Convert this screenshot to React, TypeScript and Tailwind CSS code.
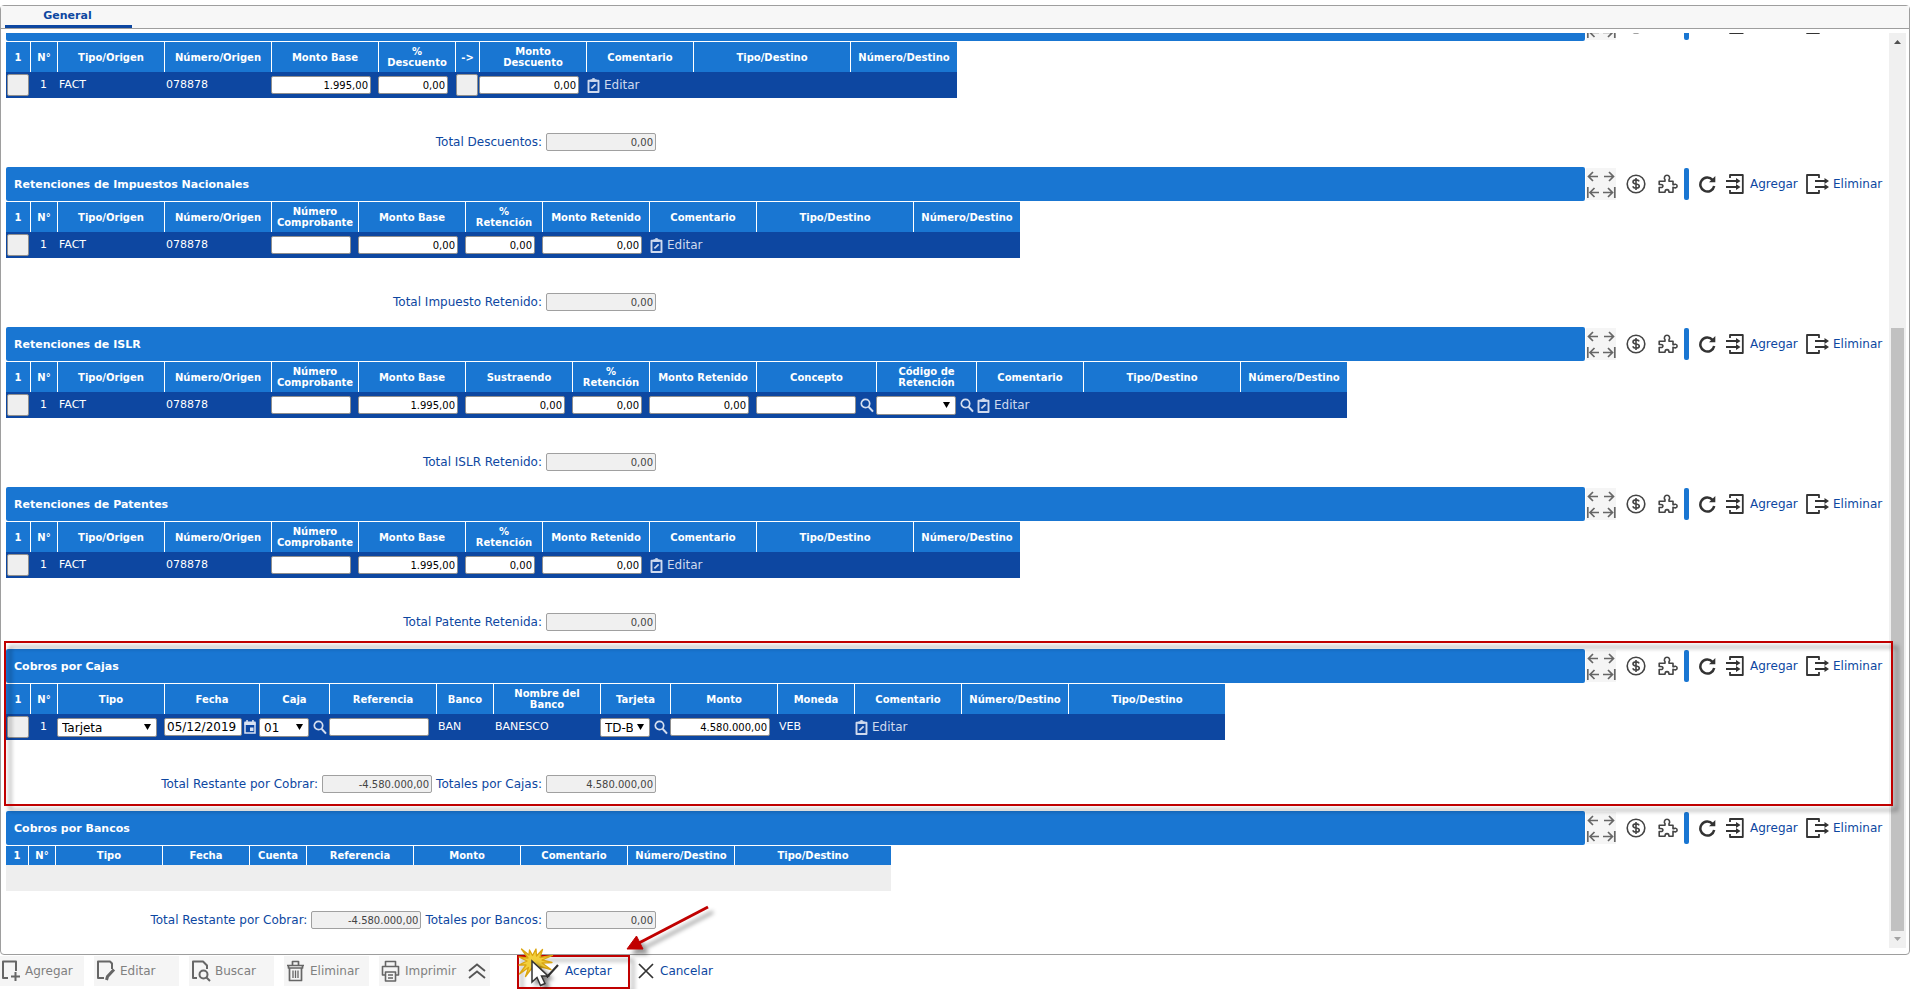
import { useState } from 'react';
import type { ReactNode } from 'react';

type Cell =
  | { kind: 'text'; value: string }
  | { kind: 'input'; value: string; width: string; align?: string; icon?: 'search' | 'calendar'; big?: boolean }
  | { kind: 'select'; value: string; width: string; icon?: 'search' }
  | { kind: 'button' }
  | { kind: 'edit' }
  | { kind: 'empty' };

type Column = { label: string; width: number; cell: Cell };
type Total = { label: string; value: string };

const text = (value: string): Cell => ({ kind: 'text', value });
const amount = (value: string, width = 'w-[100px]'): Cell => ({ kind: 'input', value, width, align: 'text-right' });
const edit: Cell = { kind: 'edit' };
const empty: Cell = { kind: 'empty' };

const origin: Column[] = [
  { label: 'Tipo/Origen', width: 107, cell: text('FACT') },
  { label: 'Número/Origen', width: 107, cell: text('078878') },
];

const destination: Column[] = [
  { label: 'Comentario', width: 107, cell: edit },
  { label: 'Tipo/Destino', width: 157, cell: empty },
  { label: 'Número/Destino', width: 107, cell: empty },
];

const descuentos: Column[] = [
  ...origin,
  { label: 'Monto Base', width: 107, cell: amount('1.995,00') },
  { label: '%\nDescuento', width: 77, cell: amount('0,00', 'w-[70px]') },
  { label: '->', width: 24, cell: { kind: 'button' } },
  { label: 'Monto\nDescuento', width: 107, cell: amount('0,00') },
  ...destination,
];

const retenciones = (base: string): Column[] => [
  ...origin,
  { label: 'Número\nComprobante', width: 87, cell: amount('', 'w-20') },
  { label: 'Monto Base', width: 107, cell: amount(base) },
  { label: '%\nRetención', width: 77, cell: amount('0,00', 'w-[70px]') },
  { label: 'Monto Retenido', width: 107, cell: amount('0,00') },
  ...destination,
];

const islr: Column[] = [
  ...origin,
  { label: 'Número\nComprobante', width: 87, cell: amount('', 'w-20') },
  { label: 'Monto Base', width: 107, cell: amount('1.995,00') },
  { label: 'Sustraendo', width: 107, cell: amount('0,00') },
  { label: '%\nRetención', width: 77, cell: amount('0,00', 'w-[70px]') },
  { label: 'Monto Retenido', width: 107, cell: amount('0,00') },
  { label: 'Concepto', width: 120, cell: { kind: 'input', value: '', width: 'w-[100px]', icon: 'search' } },
  { label: 'Código de\nRetención', width: 100, cell: { kind: 'select', value: '', width: 'w-20', icon: 'search' } },
  ...destination,
];

const cajas: Column[] = [
  { label: 'Tipo', width: 107, cell: { kind: 'select', value: 'Tarjeta', width: 'w-[100px]' } },
  { label: 'Fecha', width: 95, cell: { kind: 'input', value: '05/12/2019', width: 'w-[78px]', icon: 'calendar', big: true } },
  { label: 'Caja', width: 70, cell: { kind: 'select', value: '01', width: 'w-[50px]', icon: 'search' } },
  { label: 'Referencia', width: 107, cell: amount('') },
  { label: 'Banco', width: 57, cell: text('BAN') },
  { label: 'Nombre del\nBanco', width: 107, cell: text('BANESCO') },
  { label: 'Tarjeta', width: 70, cell: { kind: 'select', value: 'TD-BANESCO', width: 'w-[50px]', icon: 'search' } },
  { label: 'Monto', width: 107, cell: amount('4.580.000,00') },
  { label: 'Moneda', width: 77, cell: text('VEB') },
  { label: 'Comentario', width: 107, cell: edit },
  { label: 'Número/Destino', width: 107, cell: empty },
  { label: 'Tipo/Destino', width: 157, cell: empty },
];

const bancos: Column[] = [
  { label: 'Tipo', width: 107, cell: empty },
  { label: 'Fecha', width: 87, cell: empty },
  { label: 'Cuenta', width: 57, cell: empty },
  { label: 'Referencia', width: 107, cell: empty },
  { label: 'Monto', width: 107, cell: empty },
  { label: 'Comentario', width: 107, cell: empty },
  { label: 'Número/Destino', width: 107, cell: empty },
  { label: 'Tipo/Destino', width: 157, cell: empty },
];

function SearchIcon() {
  return (
    <svg viewBox="0 0 14 15" className="h-[15px] w-[14px]" fill="none" stroke="#d5dff0">
      <circle cx="5.5" cy="5.5" r="4.2" strokeWidth="1.7" />
      <path d="M8.6 8.8 13 13.6" strokeWidth="2" />
    </svg>
  );
}

function CalendarIcon() {
  return (
    <svg viewBox="0 0 12 14" className="h-[14px] w-3">
      <path d="M1 3h10v10H1z" fill="none" stroke="#dbe4f3" strokeWidth="1.5" />
      <path d="M.5 1.5h11V5H.5zM2.3 0h1.5v2H2.3zM8.2 0h1.5v2H8.2zM6 7.5h3.5V11H6z" fill="#dbe4f3" />
    </svg>
  );
}

function ClipboardIcon() {
  return (
    <svg viewBox="0 0 13 15" className="h-[15px] w-[13px]" fill="none" stroke="#cfdaee">
      <path d="M1.5 2.7h10v11.300h-10z" strokeWidth="1.9" strokeLinejoin="round" />
      <path d="M3.500 2.600h6" strokeWidth="2.6" />
      <path d="M5.300 1h2.400" strokeWidth="1.8" />
      <path d="M4.4 10.400 8.600 6.400" strokeWidth="1.8" />
    </svg>
  );
}

function Lookup({ icon, label }: { icon: 'search' | 'calendar'; label: string }) {
  return (
    <button type="button" aria-label={`Buscar ${label}`} className={icon === 'search' ? 'ml-1' : 'ml-0.5'}>
      {icon === 'search' ? <SearchIcon /> : <CalendarIcon />}
    </button>
  );
}

function CellContent({ cell, label }: { cell: Cell; label: string }) {
  switch (cell.kind) {
    case 'text':
      return <span className="pl-0.5">{cell.value}</span>;
    case 'input':
      return (
        <div className="flex items-center">
          <input
            type="text"
            aria-label={label}
            defaultValue={cell.value}
            className={`h-[18px] rounded-xs border border-[#8f8f8f] bg-white px-0.5 text-black ${cell.width} ${cell.align ?? ''} ${cell.big ? 'text-[12px]' : 'text-[10px]'}`}
          />
          {cell.icon && <Lookup icon={cell.icon} label={label} />}
        </div>
      );
    case 'select':
      return (
        <div className="flex items-center">
          <div className={`relative ${cell.width}`}>
            <select
              aria-label={label}
              defaultValue={cell.value}
              className="block h-[19px] w-full appearance-none rounded-xs border border-[#8f8f8f] bg-white pr-4 pl-1 text-[12px] text-black"
            >
              <option>{cell.value}</option>
            </select>
            <svg viewBox="0 0 7 6" className="pointer-events-none absolute top-[6px] right-[6px] h-[6px] w-[7px]">
              <path d="M0 0h7L3.5 6z" fill="#000" />
            </svg>
          </div>
          {cell.icon && <Lookup icon={cell.icon} label={label} />}
        </div>
      );
    case 'button':
      return <RowButton label="Aplicar descuento" />;
    case 'edit':
      return (
        <button type="button" className="flex items-center gap-1 pl-px text-[12px] text-[#cfdaee]">
          <ClipboardIcon />
          Editar
        </button>
      );
    default:
      return null;
  }
}

function RowButton({ label }: { label: string }) {
  return (
    <button
      type="button"
      aria-label={label}
      className="ml-px block size-[22px] rounded-xs border border-[#8f8f8f] bg-[#efefef]"
    />
  );
}

function DataGrid({ columns, rows = true }: { columns: Column[]; rows?: boolean }) {
  const first = rows ? 24 : 22;
  const total = columns.reduce((sum, c) => sum + c.width, first + 27);
  const head = 'border-l border-white p-0 text-center font-bold whitespace-pre-line first:border-l-0';
  return (
    <table className="table-fixed border-separate border-spacing-0" style={{ width: total }}>
      <colgroup>
        <col style={{ width: first }} />
        <col style={{ width: 27 }} />
        {columns.map((c) => (
          <col key={c.label} style={{ width: c.width }} />
        ))}
      </colgroup>
      <thead>
        <tr className={`bg-[#1976d2] text-[10px] leading-[11px] text-white ${rows ? 'h-[30px]' : 'h-[19px]'}`}>
          <th className={head}>1</th>
          <th className={head}>N°</th>
          {columns.map((c) => (
            <th key={c.label} className={head}>
              {c.label}
            </th>
          ))}
        </tr>
      </thead>
      <tbody>
        {rows ? (
          <tr className="h-[26px] bg-[#0d47a1] text-[11px] whitespace-nowrap text-white">
            <td className="p-0">
              <RowButton label="Seleccionar fila 1" />
            </td>
            <td className="p-0 text-center">1</td>
            {columns.map((c) => (
              <td key={c.label} className="p-0">
                <CellContent cell={c.cell} label={c.label.replace('\n', ' ')} />
              </td>
            ))}
          </tr>
        ) : (
          <tr className="h-[26px] bg-[#eeeeee]">
            <td colSpan={columns.length + 2} className="p-0" />
          </tr>
        )}
      </tbody>
    </table>
  );
}

const arrows = [
  { label: 'Anterior', d: 'M11 5.5H1.500M6 1 1.500 5.500 6 10' },
  { label: 'Siguiente', d: 'M2 5.5h9.500M7 1l4.500 4.500L7 10' },
  { label: 'Primero', d: 'M12 5.5H3M7.500 1 3 5.500 7.500 10M.8 0v11' },
  { label: 'Último', d: 'M1 5.5h9.500M6 1l4.500 4.500L6 10M12.800 0v11' },
];

function SectionToolbar({ labels }: { labels: boolean }) {
  return (
    <div className="flex h-[34px] w-[304px] shrink-0 items-center pl-px text-[12px] text-[#0d47a1]">
      <div className="grid w-[30px] grid-cols-2">
        {arrows.map((a) => (
          <button key={a.label} type="button" aria-label={a.label} className="flex h-4 items-center justify-center bg-[#f5f5f5]">
            <svg viewBox="0 0 14 11" className="h-[11px] w-[14px]" fill="none" stroke="#666" strokeWidth="1.700">
              <path d={a.d} />
            </svg>
          </button>
        ))}
      </div>
      <button type="button" aria-label="Moneda" className="ml-[10px]">
        <svg viewBox="0 0 20 20" className="size-5" fill="none" stroke="#444">
          <circle cx="10" cy="10" r="8.8" strokeWidth="1.6" />
          <path d="M13.2 7.4c-.5-1-1.7-1.5-3.1-1.5-1.8 0-3.1.8-3.1 2 0 3 6.3 1.300 6.300 4.200 0 1.200-1.400 2.100-3.200 2.100-1.600 0-2.900-.6-3.400-1.800M10 4v12" strokeWidth="1.6" />
        </svg>
      </button>
      <button type="button" aria-label="Complementos" className="ml-3">
        <svg viewBox="0 0 20 20" className="size-5" fill="none" stroke="#444" strokeWidth="1.600" strokeLinejoin="round">
          <path d="M1.200 7.200H7V5.600C5.800 4.600 6.300 1.200 9 1.200s3.200 3.400 2 4.400v1.600h4v3.600c1 .2 1.400-.8 2.500-.6 2.200.4 2.200 3.400 0 3.700-1.200.2-1.500-.8-2.500-.6v4.900h-4c0-1.800-.7-2.600-2-2.600s-2 .8-2 2.600H1.200v-4.700h1.600c2.800.2 2.800-3.100 0-3H1.200z" />
        </svg>
      </button>
      <span className="ml-[6px] h-8 w-[5px] rounded-xs bg-[#1976d2]" />
      <button type="button" aria-label="Refrescar" className="ml-[9px]">
        <svg viewBox="0 0 18 18" className="size-[18px]">
          <path d="M14.500 4.800A7 7 0 1 0 16.200 11" fill="none" stroke="#333" strokeWidth="2.500" />
          <path d="M17.300 1v6.300H11z" fill="#333" />
        </svg>
      </button>
      <button type="button" aria-label="Agregar" className="ml-[10px] flex w-[72px] items-center gap-[6px]">
        <svg viewBox="0 0 18 20" className="h-5 w-[18px] shrink-0" fill="none" stroke="#333" strokeWidth="1.800">
          <path d="M4 4V1h12.800v18H4v-3" strokeLinejoin="round" />
          <path d="M0 7h11M0 13h11" />
          <path d="M10 4 14.500 7 10 10zM10 10l4.500 3-4.500 3z" fill="#333" stroke="none" />
        </svg>
        {labels && 'Agregar'}
      </button>
      <button type="button" aria-label="Eliminar" className="ml-2 flex items-center gap-1">
        <svg viewBox="0 0 23 20" className="h-5 w-[23px] shrink-0" fill="none" stroke="#333" strokeWidth="1.800">
          <path d="M13 4V1H1v18h12v-3" strokeLinejoin="round" />
          <path d="M9 7h11M9 13h11" />
          <path d="M18.500 4 23 7l-4.500 3zM18.500 10l4.500 3-4.500 3z" fill="#333" stroke="none" />
        </svg>
        {labels && 'Eliminar'}
      </button>
    </div>
  );
}

function Section({
  title,
  columns,
  totals,
  rows,
  className = 'pb-4',
  children,
}: {
  title?: string;
  columns: Column[];
  totals: Total[];
  rows?: boolean;
  className?: string;
  children?: ReactNode;
}) {
  return (
    <section className={`relative shrink-0 ${className}`}>
      <div className="mb-px flex">
        <h2 className="h-[34px] flex-1 rounded-xs bg-[#1976d2] pl-2 text-[11px] leading-[36px] font-bold text-white">
          {title}
        </h2>
        <SectionToolbar labels={Boolean(title)} />
      </div>
      <DataGrid columns={columns} rows={rows} />
      <div className={`flex w-[650px] items-center justify-end ${rows === false ? 'pt-5' : 'pt-[35px]'}`}>
        {totals.map((t) => (
          <label key={t.label} className="ml-1 flex h-[18px] items-center gap-1 text-[12px] text-[#0d47a1]">
            {t.label}
            <input
              type="text"
              readOnly
              value={t.value}
              className="h-[18px] w-[110px] rounded-xs border border-[#a0a0a0] bg-[#f0f0f0] px-0.5 text-right text-[10px] text-[#444]"
            />
          </label>
        ))}
      </div>
      {children}
    </section>
  );
}

function Scrollbar() {
  return (
    <div className="flex w-[17px] shrink-0 flex-col items-center bg-[#f0f0f0]">
      <svg viewBox="0 0 17 17" className="size-[17px] shrink-0">
        <path d="M5 11h7L8.500 7z" fill="#505050" />
      </svg>
      <div className="flex-[278]" />
      <div className="w-[13px] flex-[603] bg-[#c1c1c1]" />
      <svg viewBox="0 0 17 17" className="size-[17px] shrink-0">
        <path d="M5 6h7l-3.500 4z" fill="#a3a3a3" />
      </svg>
    </div>
  );
}

const actionIcons: Record<string, ReactNode> = {
  Agregar: <path d="M7 18H2V1.500h13V11M14.500 12v9M10 16.500h9" />,
  Editar: (
    <>
      <path d="M8 18H2V1.500h12l2 2V9" />
      <path d="m10.500 20 1-3.500 6.500-7" strokeWidth="3" />
    </>
  ),
  Buscar: (
    <>
      <path d="M6 18H2V1.500h10l4 4V9" />
      <circle cx="12.500" cy="14.500" r="4" />
      <path d="m15.500 17.500 3.500 3.500" />
    </>
  ),
  Eliminar: (
    <>
      <path d="M1 5.500h17M6.500 5V1.500h6V5M2.500 5.500V8h14V5.500M3.500 8v12.500h12V8" strokeWidth="1.700" />
      <path d="M7 10.500V18M9.500 10.500V18M12 10.500V18" strokeWidth="1.300" />
    </>
  ),
  Imprimir: <path d="M4.500 6V1.500h10V6M4.500 15H1.500V6.500h16V15h-3M4.500 12h10v9h-10zM7 15h5M7 18h5" strokeWidth="1.600" />,
};

const actions = [
  { label: 'Agregar', className: 'w-[84px] gap-1 pl-px' },
  { label: 'Editar', className: 'ml-[10px] w-[85px] gap-1 pl-0.5' },
  { label: 'Buscar', className: 'ml-[10px] w-[85px] gap-1 pl-0.5' },
  { label: 'Eliminar', className: 'ml-[10px] w-[85px] gap-1 pl-0.5' },
  { label: 'Imprimir', className: 'ml-[10px] w-[85px] gap-1 pl-0.5' },
];

function ActionBar() {
  return (
    <footer className="relative flex h-[34px] shrink-0 items-start pt-px text-[12px]">
      {actions.map((a) => (
        <button key={a.label} type="button" disabled className={`flex h-[30px] items-center bg-[#f5f5f5] text-[#808080] ${a.className}`}>
          <svg viewBox="0 0 20 22" className="h-[22px] w-5 shrink-0" fill="none" stroke="#666" strokeWidth="2" strokeLinejoin="round">
            {actionIcons[a.label]}
          </svg>
          {a.label}
        </button>
      ))}
      <button type="button" aria-label="Contraer" className="flex h-[30px] w-[26px] items-center justify-center bg-[#f5f5f5]">
        <svg viewBox="0 0 18 16" className="h-4 w-[18px]" fill="none" stroke="#555" strokeWidth="1.800">
          <path d="m1 8 8-6.500L17 8M1 15l8-6.500 8 6.500" />
        </svg>
      </button>
      <div className="relative -mt-px ml-[27px] h-[34px] w-[113px]">
        <button type="button" className="flex h-8 w-full items-center gap-[6px] pl-6 text-[#0d47a1]">
          <svg viewBox="0 0 18 14" className="h-[14px] w-[18px]" fill="none" stroke="#333" strokeWidth="2.200">
            <path d="m1 7 5.500 5.500L17 1" />
          </svg>
          Aceptar
        </button>
        <div className="pointer-events-none absolute inset-0 border-2 border-[#c00000] drop-shadow-[4px_4px_2px_rgba(0,0,0,0.4)]" />
        <ClickMark />
        <Arrow />
      </div>
      <button type="button" className="ml-2 flex h-[30px] items-center gap-[6px] text-[#0d47a1]">
        <svg viewBox="0 0 16 16" className="size-4" fill="none" stroke="#333" strokeWidth="1.700">
          <path d="m1 1 14 14M15 1 1 15" />
        </svg>
        Cancelar
      </button>
    </footer>
  );
}

// Yellow burst with the mouse pointer on top of the Aceptar button
function ClickMark() {
  return (
    <svg viewBox="0 0 44 44" className="pointer-events-none absolute -top-[9px] left-px h-11 w-11 overflow-visible">
      <path
        d="M3.500 3 11 9l.5-5 3 5.500L18 3l.5 7 6-6.500-2.500 8 12.500-2L24 14l10 2.500-10 .5 9 6.500-11-3 3 6-6.500-4-2 5-3-5-6 8 3-9-9 6.500 6.500-9L1 19l8-4-8-4 9 1z"
        fill="#f3cf3a"
        stroke="#dba510"
        strokeWidth="1.300"
        strokeLinejoin="round"
      />
      <path
        d="M14 15v21l5-4.500 3.500 8 4.500-2-3.500-7.500h6.500z"
        fill="#fff"
        stroke="#333"
        strokeWidth="1.500"
        className="drop-shadow-[4px_3px_2px_rgba(0,0,0,0.5)]"
      />
    </svg>
  );
}

function Arrow() {
  return (
    <svg
      viewBox="0 0 84 44"
      className="pointer-events-none absolute -top-[49px] left-[109px] h-11 w-[84px] overflow-visible drop-shadow-[5px_5px_2px_rgba(0,0,0,0.4)]"
    >
      <path d="M82 1 11 38" stroke="#c00000" strokeWidth="3" />
      <path d="M1 43 10.500 30l6.500 13z" fill="#c00000" stroke="#c00000" />
    </svg>
  );
}

export default function App() {
  const [tab, setTab] = useState('General');

  return (
    <div className="flex h-screen flex-col overflow-hidden bg-white pt-[5px] font-['DejaVu_Sans',Verdana,sans-serif]">
      <main className="flex min-h-0 flex-1 flex-col rounded-sm border border-[#9e9e9e]">
        <div role="tablist" className="flex h-[23px] shrink-0 border-b border-[#9e9e9e] bg-[#f7f7f7] pl-1">
          <button
            type="button"
            role="tab"
            aria-selected={tab === 'General'}
            onClick={() => setTab('General')}
            className="h-[22px] w-[127px] border-b-[3px] border-[#0d47a1] pr-0.5 text-center text-[11px] leading-[19px] font-bold text-[#0d47a1]"
          >
            General
          </button>
        </div>
        <div className="mt-1 mr-[3px] mb-[6px] flex min-h-0 flex-1 overflow-hidden pl-[5px]">
          <div className="flex min-w-0 flex-1 flex-col justify-end pb-[19px]">
            <Section columns={descuentos} totals={[{ label: 'Total Descuentos:', value: '0,00' }]} />
            <Section
              title="Retenciones de Impuestos Nacionales"
              columns={retenciones('0,00')}
              totals={[{ label: 'Total Impuesto Retenido:', value: '0,00' }]}
            />
            <Section title="Retenciones de ISLR" columns={islr} totals={[{ label: 'Total ISLR Retenido:', value: '0,00' }]} />
            <Section
              title="Retenciones de Patentes"
              columns={retenciones('1.995,00')}
              totals={[{ label: 'Total Patente Retenida:', value: '0,00' }]}
            />
            <Section
              title="Cobros por Cajas"
              columns={cajas}
              className="mt-0.5 pb-[18px]"
              totals={[
                { label: 'Total Restante por Cobrar:', value: '-4.580.000,00' },
                { label: 'Totales por Cajas:', value: '4.580.000,00' },
              ]}
            >
              <div className="pointer-events-none absolute -top-2 -right-1 bottom-[5px] -left-0.5 z-10 border-2 border-[#c00000] drop-shadow-[5px_5px_2px_rgba(0,0,0,0.4)]" />
            </Section>
            <Section
              title="Cobros por Bancos"
              columns={bancos}
              rows={false}
              className=""
              totals={[
                { label: 'Total Restante por Cobrar:', value: '-4.580.000,00' },
                { label: 'Totales por Bancos:', value: '0,00' },
              ]}
            />
          </div>
          <Scrollbar />
        </div>
      </main>
      <ActionBar />
    </div>
  );
}
